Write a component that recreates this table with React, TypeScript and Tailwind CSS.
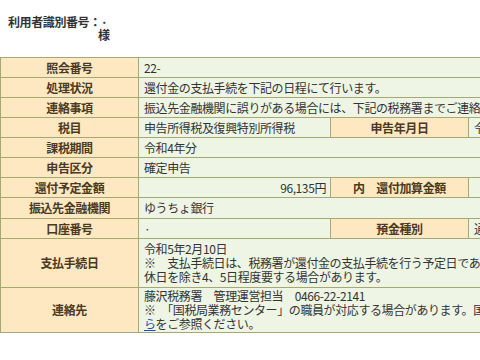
import React from "react";

const L = "bg-[#fde8c2] text-[#4a3a1f] font-bold text-center border border-[#a4a872] px-1 whitespace-nowrap";
const V = "bg-[#eef5e4] text-[#333] border border-[#a4a872] pl-[5px] pr-1 whitespace-nowrap text-left";

export default function App() {
  return (
    <div
      className="w-[480px] h-[360px] overflow-hidden bg-white text-[12px] tracking-[-0.4px]"
      style={{ fontFamily: '"Noto Sans CJK JP", "Noto Sans", sans-serif' }}
    >
      <div className="pt-[16px] pl-[8px] font-bold text-[#333] leading-[12px]">
        <div>利用者識別番号：·</div>
        <div className="pl-[90px] pt-[1px]">様</div>
      </div>
      <table className="mt-[16px] w-[640px] border-collapse leading-[14px] table-fixed">
        <colgroup>
          <col className="w-[138px]" />
          <col className="w-[192px]" />
          <col className="w-[138px]" />
          <col />
        </colgroup>
        <tbody>
          <tr className="h-[20px]">
            <td className={L}>照会番号</td>
            <td className={V} colSpan={3}>22-</td>
          </tr>
          <tr className="h-[20px]">
            <td className={L}>処理状況</td>
            <td className={V} colSpan={3}>還付金の支払手続を下記の日程にて行います。</td>
          </tr>
          <tr className="h-[20px]">
            <td className={L}>連絡事項</td>
            <td className={V} colSpan={3}>振込先金融機関に誤りがある場合には、下記の税務署までご連絡ください。</td>
          </tr>
          <tr className="h-[20px]">
            <td className={L}>税目</td>
            <td className={V}>申告所得税及復興特別所得税</td>
            <td className={L}>申告年月日</td>
            <td className={V}>令和5年2月3日</td>
          </tr>
          <tr className="h-[20px]">
            <td className={L}>課税期間</td>
            <td className={V} colSpan={3}>令和4年分</td>
          </tr>
          <tr className="h-[20px]">
            <td className={L}>申告区分</td>
            <td className={V} colSpan={3}>確定申告</td>
          </tr>
          <tr className="h-[20px]">
            <td className={L}>還付予定金額</td>
            <td className={V + " !text-right"}>96,135円</td>
            <td className={L}>内　還付加算金額</td>
            <td className={V}></td>
          </tr>
          <tr className="h-[21px]">
            <td className={L}>振込先金融機関</td>
            <td className={V} colSpan={3}>ゆうちょ銀行</td>
          </tr>
          <tr className="h-[20px]">
            <td className={L}>口座番号</td>
            <td className={V}>·</td>
            <td className={L}>預金種別</td>
            <td className={V}>通常貯金</td>
          </tr>
          <tr className="h-[49px]">
            <td className={L}>支払手続日</td>
            <td className={V} colSpan={3}>
              令和5年2月10日
              <br />
              ※　支払手続日は、税務署が還付金の支払手続を行う予定日であり、実際に口座に振り込まれるまでには、
              <br />
              休日を除き4、5日程度要する場合があります。
            </td>
          </tr>
          <tr className="h-[45px]">
            <td className={L}>連絡先</td>
            <td className={V} colSpan={3}>
              藤沢税務署　管理運営担当　0466-22-2141
              <br />
              ※　「国税局業務センター」の職員が対応する場合があります。国税局業務センターについては
              <a className="text-[#1a4fc4] underline">こち</a>
              <br />
              <a className="text-[#1a4fc4] underline">ら</a>をご参照ください。
            </td>
          </tr>
        </tbody>
      </table>
    </div>
  );
}
